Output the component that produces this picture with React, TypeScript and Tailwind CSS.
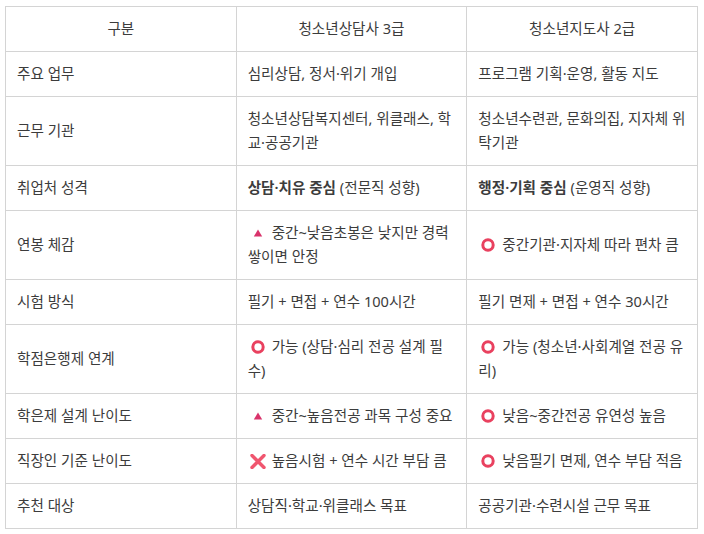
import React from "react";

type Icon = "tri" | "o" | "x" | null;

const Tri = () => (
  <svg width="10" height="8" viewBox="0 0 10 8">
    <polygon points="5,0.5 9.2,7.5 0.8,7.5" fill="#d9336b" />
  </svg>
);
const Circ = () => (
  <svg width="14" height="14" viewBox="0 0 14 14">
    <circle cx="7" cy="7" r="5.2" fill="none" stroke="#e9415f" strokeWidth="3" />
  </svg>
);
const Cross = () => (
  <svg width="16" height="15" viewBox="0 0 16 15">
    <path d="M2 1.5 L14 13.5 M14 1.5 L2 13.5" stroke="#f0566f" strokeWidth="3.4" strokeLinecap="round" />
  </svg>
);

function Cell({ icon, bold, text }: { icon?: Icon; bold?: string; text: string }) {
  return (
    <td className="border border-[#d4d4d4] px-[11px] pt-[9px] pb-[11px] align-middle">
      {icon && (
        <span className="inline-flex w-[20px] mr-[4px] justify-center items-center align-middle relative top-[-1px]">
          {icon === "tri" ? <Tri /> : icon === "o" ? <Circ /> : <Cross />}
        </span>
      )}
      {bold && <span className="font-semibold">{bold}</span>}
      {text}
    </td>
  );
}

const rows: { label: string; a: { icon?: Icon; bold?: string; text: string }; b: { icon?: Icon; bold?: string; text: string } }[] = [
  { label: "주요 업무", a: { text: "심리상담, 정서·위기 개입" }, b: { text: "프로그램 기획·운영, 활동 지도" } },
  { label: "근무 기관", a: { text: "청소년상담복지센터, 위클래스, 학교·공공기관" }, b: { text: "청소년수련관, 문화의집, 지자체 위탁기관" } },
  { label: "취업처 성격", a: { bold: "상담·치유 중심", text: " (전문직 성향)" }, b: { bold: "행정·기획 중심", text: " (운영직 성향)" } },
  { label: "연봉 체감", a: { icon: "tri", text: "중간~낮음초봉은 낮지만 경력 쌓이면 안정" }, b: { icon: "o", text: "중간기관·지자체 따라 편차 큼" } },
  { label: "시험 방식", a: { text: "필기 + 면접 + 연수 100시간" }, b: { text: "필기 면제 + 면접 + 연수 30시간" } },
  { label: "학점은행제 연계", a: { icon: "o", text: "가능 (상담·심리 전공 설계 필수)" }, b: { icon: "o", text: "가능 (청소년·사회계열 전공 유리)" } },
  { label: "학은제 설계 난이도", a: { icon: "tri", text: "중간~높음전공 과목 구성 중요" }, b: { icon: "o", text: "낮음~중간전공 유연성 높음" } },
  { label: "직장인 기준 난이도", a: { icon: "x", text: "높음시험 + 연수 시간 부담 큼" }, b: { icon: "o", text: "낮음필기 면제, 연수 부담 적음" } },
  { label: "추천 대상", a: { text: "상담직·학교·위클래스 목표" }, b: { text: "공공기관·수련시설 근무 목표" } },
];

export default function App() {
  return (
    <div
      className="bg-white w-[704px] h-[534px] pl-[5px] pt-[6px] text-[#3c3c3c] text-[14.6px] leading-[24px]"
      style={{ fontFamily: '"Noto Sans", "Noto Sans CJK KR", sans-serif' }}
    >
      <table className="w-[693px] table-fixed border-collapse border border-[#d4d4d4]">
        <thead>
          <tr>
            <th className="w-1/3 border border-[#d4d4d4] px-[11px] pt-[9px] pb-[11px] font-normal text-center">구분</th>
            <th className="w-1/3 border border-[#d4d4d4] px-[11px] pt-[9px] pb-[11px] font-normal text-center">청소년상담사 3급</th>
            <th className="w-1/3 border border-[#d4d4d4] px-[11px] pt-[9px] pb-[11px] font-normal text-center">청소년지도사 2급</th>
          </tr>
        </thead>
        <tbody>
          {rows.map((r) => (
            <tr key={r.label}>
              <td className="border border-[#d4d4d4] px-[11px] pt-[9px] pb-[11px] align-middle">{r.label}</td>
              <Cell {...r.a} />
              <Cell {...r.b} />
            </tr>
          ))}
        </tbody>
      </table>
    </div>
  );
}
